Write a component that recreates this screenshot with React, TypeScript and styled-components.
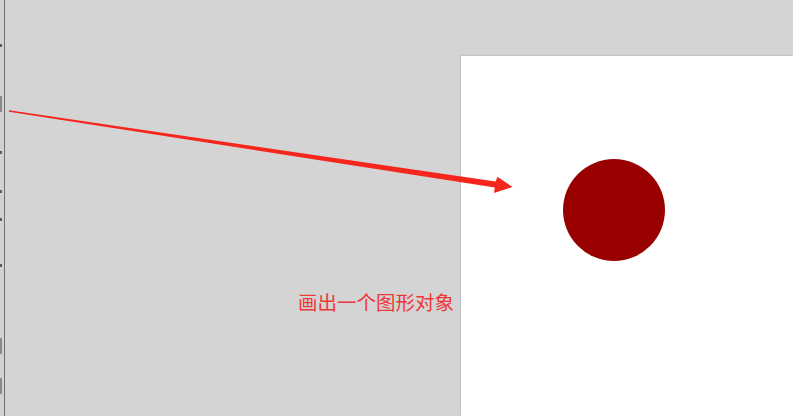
import styled, { createGlobalStyle } from 'styled-components';

const GlobalStyle = createGlobalStyle`
  html, body {
    margin: 0;
    padding: 0;
    background: #d4d4d4;
    overflow: hidden;
  }
  #root {
    width: 793px;
    height: 416px;
  }
`;

const Screen = styled.div`
  position: relative;
  display: flex;
  width: 793px;
  height: 416px;
  background: #d4d4d4;
  font-family: 'Noto Sans CJK SC', 'Noto Sans', sans-serif;
`;

// cut-off tool panel on the far left
const SidePanel = styled.div`
  position: relative;
  width: 4px;
  flex: none;
  border-right: 1px solid #707070;
  background: #d2d2d2;
`;

const Tick = styled.div<{ top: number; size?: number }>`
  position: absolute;
  left: 0;
  top: ${(p) => p.top}px;
  width: 2px;
  height: ${(p) => p.size ?? 3}px;
  background: ${(p) => ((p.size ?? 3) > 6 ? '#8a8a8a' : '#5a5a5a')};
`;

const Workspace = styled.div`
  flex: 1;
  display: flex;
  justify-content: flex-end;
  align-items: flex-start;
  padding-top: 56px;
`;

const Canvas = styled.div`
  width: 332px;
  height: 360px;
  background: #ffffff;
  box-shadow: -1px -1px 1px rgba(0, 0, 0, 0.07);
  padding: 103px 0 0 102px;
  box-sizing: border-box;
`;

const Circle = styled.div`
  width: 102px;
  height: 102px;
  border-radius: 50%;
  background: #990000;
`;

const Overlay = styled.svg`
  position: absolute;
  left: 0;
  top: 0;
  pointer-events: none;
`;

const Note = styled.div`
  position: absolute;
  left: 298px;
  top: 291px;
  font-size: 19.5px;
  line-height: 22px;
  color: #ee3838;
  white-space: nowrap;
`;

const ticks = [
  { top: 44 },
  { top: 96, size: 16 },
  { top: 151 },
  { top: 190 },
  { top: 218 },
  { top: 264 },
  { top: 338, size: 16 },
  { top: 378, size: 16 },
];

export default function App() {
  return (
    <>
      <GlobalStyle />
      <Screen>
        <SidePanel>
          {ticks.map((t, i) => (
            <Tick key={i} top={t.top} size={t.size} />
          ))}
        </SidePanel>
        <Workspace>
          <Canvas>
            <Circle />
          </Canvas>
        </Workspace>
        <Overlay width={793} height={416} viewBox="0 0 793 416">
          <polygon
            fill="#f5261c"
            points="9.1,110.2 495.6,181.6 497.5,176.8 512.5,187 494,193 494.8,187.4 8.9,111.8"
          />
        </Overlay>
        <Note>画出一个图形对象</Note>
      </Screen>
    </>
  );
}
